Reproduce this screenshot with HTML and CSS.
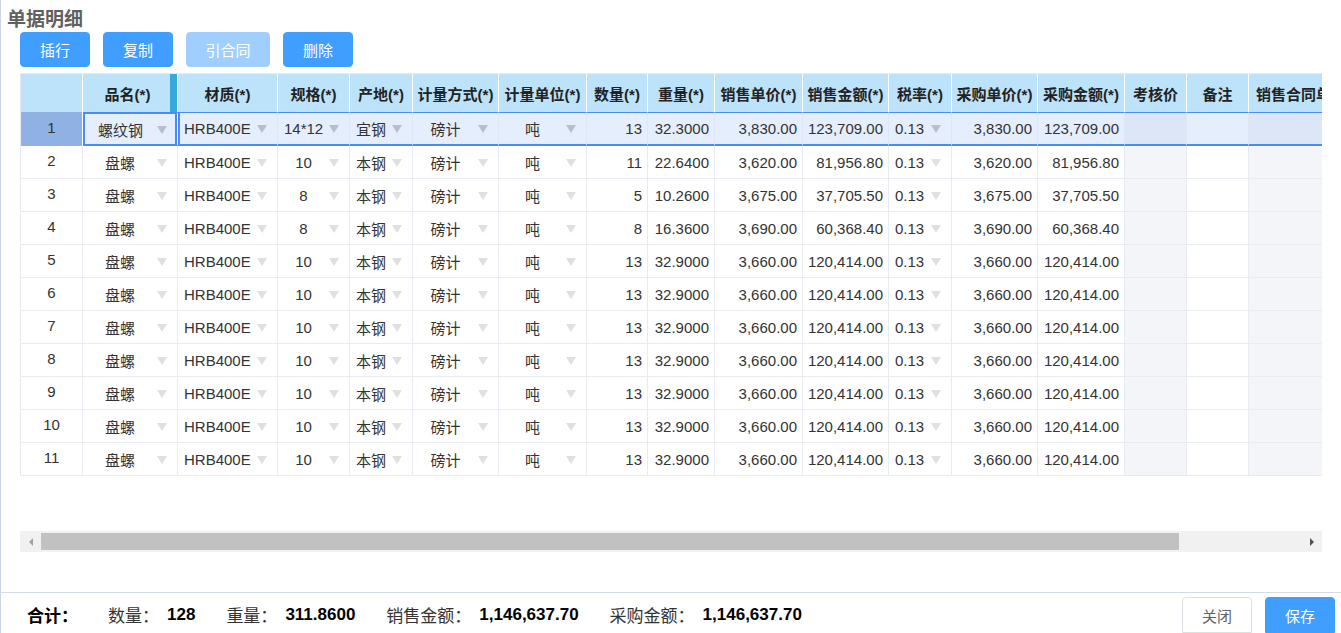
FILE: index.html
```html
<!DOCTYPE html>
<html lang="zh-CN">
<head>
<meta charset="utf-8">
<title>单据明细</title>
<link rel="stylesheet" href="styles.css">
</head>
<body>
<div class="page">
  <div class="title">单据明细</div>
  <div class="toolbar">
    <button class="btn primary">插行</button>
    <button class="btn primary">复制</button>
    <button class="btn primary disabled wide">引合同</button>
    <button class="btn primary">删除</button>
  </div>

  <div class="grid-wrap">
    <div class="viewport">
      <div class="rows">
        <div class="row head">
          <div class="cell">&nbsp;</div>
          <div class="cell split">品名(*)</div>
          <div class="cell">材质(*)</div>
          <div class="cell">规格(*)</div>
          <div class="cell">产地(*)</div>
          <div class="cell">计量方式(*)</div>
          <div class="cell">计量单位(*)</div>
          <div class="cell">数量(*)</div>
          <div class="cell">重量(*)</div>
          <div class="cell">销售单价(*)</div>
          <div class="cell">销售金额(*)</div>
          <div class="cell">税率(*)</div>
          <div class="cell">采购单价(*)</div>
          <div class="cell">采购金额(*)</div>
          <div class="cell">考核价</div>
          <div class="cell">备注</div>
          <div class="cell">销售合同单号</div>
        </div>

        <div class="row sel">
          <div class="cell num">1</div>
          <div class="cell dd center active"><span class="v">螺纹钢</span><i class="arr"></i></div>
          <div class="cell dd first"><span class="v">HRB400E</span><i class="arr"></i></div>
          <div class="cell dd center"><span class="v">14*12</span><i class="arr"></i></div>
          <div class="cell dd"><span class="v">宜钢</span><i class="arr"></i></div>
          <div class="cell dd center"><span class="v">磅计</span><i class="arr"></i></div>
          <div class="cell dd center"><span class="v">吨</span><i class="arr"></i></div>
          <div class="cell r">13</div>
          <div class="cell r">32.3000</div>
          <div class="cell r">3,830.00</div>
          <div class="cell r">123,709.00</div>
          <div class="cell dd"><span class="v">0.13</span><i class="arr"></i></div>
          <div class="cell r">3,830.00</div>
          <div class="cell r">123,709.00</div>
          <div class="cell shade"></div>
          <div class="cell"></div>
          <div class="cell shade"></div>
        </div>

        <div class="row">
          <div class="cell num">2</div>
          <div class="cell dd center"><span class="v">盘螺</span><i class="arr"></i></div>
          <div class="cell dd"><span class="v">HRB400E</span><i class="arr"></i></div>
          <div class="cell dd center"><span class="v">10</span><i class="arr"></i></div>
          <div class="cell dd"><span class="v">本钢</span><i class="arr"></i></div>
          <div class="cell dd center"><span class="v">磅计</span><i class="arr"></i></div>
          <div class="cell dd center"><span class="v">吨</span><i class="arr"></i></div>
          <div class="cell r">11</div>
          <div class="cell r">22.6400</div>
          <div class="cell r">3,620.00</div>
          <div class="cell r">81,956.80</div>
          <div class="cell dd"><span class="v">0.13</span><i class="arr"></i></div>
          <div class="cell r">3,620.00</div>
          <div class="cell r">81,956.80</div>
          <div class="cell shade"></div>
          <div class="cell"></div>
          <div class="cell shade"></div>
        </div>

        <div class="row">
          <div class="cell num">3</div>
          <div class="cell dd center"><span class="v">盘螺</span><i class="arr"></i></div>
          <div class="cell dd"><span class="v">HRB400E</span><i class="arr"></i></div>
          <div class="cell dd center"><span class="v">8</span><i class="arr"></i></div>
          <div class="cell dd"><span class="v">本钢</span><i class="arr"></i></div>
          <div class="cell dd center"><span class="v">磅计</span><i class="arr"></i></div>
          <div class="cell dd center"><span class="v">吨</span><i class="arr"></i></div>
          <div class="cell r">5</div>
          <div class="cell r">10.2600</div>
          <div class="cell r">3,675.00</div>
          <div class="cell r">37,705.50</div>
          <div class="cell dd"><span class="v">0.13</span><i class="arr"></i></div>
          <div class="cell r">3,675.00</div>
          <div class="cell r">37,705.50</div>
          <div class="cell shade"></div>
          <div class="cell"></div>
          <div class="cell shade"></div>
        </div>

        <div class="row">
          <div class="cell num">4</div>
          <div class="cell dd center"><span class="v">盘螺</span><i class="arr"></i></div>
          <div class="cell dd"><span class="v">HRB400E</span><i class="arr"></i></div>
          <div class="cell dd center"><span class="v">8</span><i class="arr"></i></div>
          <div class="cell dd"><span class="v">本钢</span><i class="arr"></i></div>
          <div class="cell dd center"><span class="v">磅计</span><i class="arr"></i></div>
          <div class="cell dd center"><span class="v">吨</span><i class="arr"></i></div>
          <div class="cell r">8</div>
          <div class="cell r">16.3600</div>
          <div class="cell r">3,690.00</div>
          <div class="cell r">60,368.40</div>
          <div class="cell dd"><span class="v">0.13</span><i class="arr"></i></div>
          <div class="cell r">3,690.00</div>
          <div class="cell r">60,368.40</div>
          <div class="cell shade"></div>
          <div class="cell"></div>
          <div class="cell shade"></div>
        </div>

        <div class="row">
          <div class="cell num">5</div>
          <div class="cell dd center"><span class="v">盘螺</span><i class="arr"></i></div>
          <div class="cell dd"><span class="v">HRB400E</span><i class="arr"></i></div>
          <div class="cell dd center"><span class="v">10</span><i class="arr"></i></div>
          <div class="cell dd"><span class="v">本钢</span><i class="arr"></i></div>
          <div class="cell dd center"><span class="v">磅计</span><i class="arr"></i></div>
          <div class="cell dd center"><span class="v">吨</span><i class="arr"></i></div>
          <div class="cell r">13</div>
          <div class="cell r">32.9000</div>
          <div class="cell r">3,660.00</div>
          <div class="cell r">120,414.00</div>
          <div class="cell dd"><span class="v">0.13</span><i class="arr"></i></div>
          <div class="cell r">3,660.00</div>
          <div class="cell r">120,414.00</div>
          <div class="cell shade"></div>
          <div class="cell"></div>
          <div class="cell shade"></div>
        </div>

        <div class="row">
          <div class="cell num">6</div>
          <div class="cell dd center"><span class="v">盘螺</span><i class="arr"></i></div>
          <div class="cell dd"><span class="v">HRB400E</span><i class="arr"></i></div>
          <div class="cell dd center"><span class="v">10</span><i class="arr"></i></div>
          <div class="cell dd"><span class="v">本钢</span><i class="arr"></i></div>
          <div class="cell dd center"><span class="v">磅计</span><i class="arr"></i></div>
          <div class="cell dd center"><span class="v">吨</span><i class="arr"></i></div>
          <div class="cell r">13</div>
          <div class="cell r">32.9000</div>
          <div class="cell r">3,660.00</div>
          <div class="cell r">120,414.00</div>
          <div class="cell dd"><span class="v">0.13</span><i class="arr"></i></div>
          <div class="cell r">3,660.00</div>
          <div class="cell r">120,414.00</div>
          <div class="cell shade"></div>
          <div class="cell"></div>
          <div class="cell shade"></div>
        </div>

        <div class="row">
          <div class="cell num">7</div>
          <div class="cell dd center"><span class="v">盘螺</span><i class="arr"></i></div>
          <div class="cell dd"><span class="v">HRB400E</span><i class="arr"></i></div>
          <div class="cell dd center"><span class="v">10</span><i class="arr"></i></div>
          <div class="cell dd"><span class="v">本钢</span><i class="arr"></i></div>
          <div class="cell dd center"><span class="v">磅计</span><i class="arr"></i></div>
          <div class="cell dd center"><span class="v">吨</span><i class="arr"></i></div>
          <div class="cell r">13</div>
          <div class="cell r">32.9000</div>
          <div class="cell r">3,660.00</div>
          <div class="cell r">120,414.00</div>
          <div class="cell dd"><span class="v">0.13</span><i class="arr"></i></div>
          <div class="cell r">3,660.00</div>
          <div class="cell r">120,414.00</div>
          <div class="cell shade"></div>
          <div class="cell"></div>
          <div class="cell shade"></div>
        </div>

        <div class="row">
          <div class="cell num">8</div>
          <div class="cell dd center"><span class="v">盘螺</span><i class="arr"></i></div>
          <div class="cell dd"><span class="v">HRB400E</span><i class="arr"></i></div>
          <div class="cell dd center"><span class="v">10</span><i class="arr"></i></div>
          <div class="cell dd"><span class="v">本钢</span><i class="arr"></i></div>
          <div class="cell dd center"><span class="v">磅计</span><i class="arr"></i></div>
          <div class="cell dd center"><span class="v">吨</span><i class="arr"></i></div>
          <div class="cell r">13</div>
          <div class="cell r">32.9000</div>
          <div class="cell r">3,660.00</div>
          <div class="cell r">120,414.00</div>
          <div class="cell dd"><span class="v">0.13</span><i class="arr"></i></div>
          <div class="cell r">3,660.00</div>
          <div class="cell r">120,414.00</div>
          <div class="cell shade"></div>
          <div class="cell"></div>
          <div class="cell shade"></div>
        </div>

        <div class="row">
          <div class="cell num">9</div>
          <div class="cell dd center"><span class="v">盘螺</span><i class="arr"></i></div>
          <div class="cell dd"><span class="v">HRB400E</span><i class="arr"></i></div>
          <div class="cell dd center"><span class="v">10</span><i class="arr"></i></div>
          <div class="cell dd"><span class="v">本钢</span><i class="arr"></i></div>
          <div class="cell dd center"><span class="v">磅计</span><i class="arr"></i></div>
          <div class="cell dd center"><span class="v">吨</span><i class="arr"></i></div>
          <div class="cell r">13</div>
          <div class="cell r">32.9000</div>
          <div class="cell r">3,660.00</div>
          <div class="cell r">120,414.00</div>
          <div class="cell dd"><span class="v">0.13</span><i class="arr"></i></div>
          <div class="cell r">3,660.00</div>
          <div class="cell r">120,414.00</div>
          <div class="cell shade"></div>
          <div class="cell"></div>
          <div class="cell shade"></div>
        </div>

        <div class="row">
          <div class="cell num">10</div>
          <div class="cell dd center"><span class="v">盘螺</span><i class="arr"></i></div>
          <div class="cell dd"><span class="v">HRB400E</span><i class="arr"></i></div>
          <div class="cell dd center"><span class="v">10</span><i class="arr"></i></div>
          <div class="cell dd"><span class="v">本钢</span><i class="arr"></i></div>
          <div class="cell dd center"><span class="v">磅计</span><i class="arr"></i></div>
          <div class="cell dd center"><span class="v">吨</span><i class="arr"></i></div>
          <div class="cell r">13</div>
          <div class="cell r">32.9000</div>
          <div class="cell r">3,660.00</div>
          <div class="cell r">120,414.00</div>
          <div class="cell dd"><span class="v">0.13</span><i class="arr"></i></div>
          <div class="cell r">3,660.00</div>
          <div class="cell r">120,414.00</div>
          <div class="cell shade"></div>
          <div class="cell"></div>
          <div class="cell shade"></div>
        </div>

        <div class="row">
          <div class="cell num">11</div>
          <div class="cell dd center"><span class="v">盘螺</span><i class="arr"></i></div>
          <div class="cell dd"><span class="v">HRB400E</span><i class="arr"></i></div>
          <div class="cell dd center"><span class="v">10</span><i class="arr"></i></div>
          <div class="cell dd"><span class="v">本钢</span><i class="arr"></i></div>
          <div class="cell dd center"><span class="v">磅计</span><i class="arr"></i></div>
          <div class="cell dd center"><span class="v">吨</span><i class="arr"></i></div>
          <div class="cell r">13</div>
          <div class="cell r">32.9000</div>
          <div class="cell r">3,660.00</div>
          <div class="cell r">120,414.00</div>
          <div class="cell dd"><span class="v">0.13</span><i class="arr"></i></div>
          <div class="cell r">3,660.00</div>
          <div class="cell r">120,414.00</div>
          <div class="cell shade"></div>
          <div class="cell"></div>
          <div class="cell shade"></div>
        </div>
      </div>
    </div>
    <div class="hscroll">
      <div class="sb-btn left"><i></i></div>
      <div class="sb-thumb"></div>
      <div class="sb-rest"></div>
      <div class="sb-btn right"><i></i></div>
    </div>
  </div>

  <div class="footer">
    <div class="sum">
      <span class="total">合计：</span>
      <span class="item"><span class="lbl">数量：</span><b>128</b></span>
      <span class="item"><span class="lbl">重量：</span><b>311.8600</b></span>
      <span class="item"><span class="lbl">销售金额：</span><b>1,146,637.70</b></span>
      <span class="item"><span class="lbl">采购金额：</span><b>1,146,637.70</b></span>
    </div>
    <div class="actions">
      <button class="btn plain">关闭</button>
      <button class="btn primary">保存</button>
    </div>
  </div>
</div>
</body>
</html>
```

FILE: styles.css
```css
html, body {
  margin: 0;
  padding: 0;
  background: #fff;
}
body {
  font-family: "Liberation Sans", "Noto Sans CJK SC", sans-serif;
  color: #333;
  font-size: 15px;
  overflow: hidden;
}
.page {
  box-sizing: border-box;
  height: 633px;
  border-left: 1px solid #cdd6e6;
  padding-top: 8px;
  display: flex;
  flex-direction: column;
}
.title {
  font-size: 19px;
  font-weight: bold;
  line-height: 24px;
  height: 24px;
  color: #606060;
  padding-left: 6px;
}
.toolbar {
  display: flex;
  gap: 13px;
  padding-left: 19px;
}
.btn {
  box-sizing: border-box;
  width: 70px;
  height: 35px;
  border: 1px solid transparent;
  border-radius: 4px;
  font-family: "Liberation Sans", "Noto Sans CJK SC", sans-serif;
  font-size: 15px;
  padding: 0;
  cursor: pointer;
}
.btn.primary {
  background: #409eff;
  border-color: #409eff;
  color: #fff;
}
.btn.disabled {
  background: #a0cfff;
  border-color: #a0cfff;
}
.btn.wide {
  width: 84px;
}
.btn.plain {
  background: #fff;
  border-color: #dcdfe6;
  color: #606266;
}

.grid-wrap {
  margin-left: 19px;
  margin-top: 6px;
  width: 1302px;
}
.viewport {
  height: 458px;
  overflow: hidden;
}
.rows {
  width: 1348px;
  border-top: 1px solid #e6e9ef;
  border-left: 1px solid #e6e9ef;
}
.row {
  display: grid;
  grid-template-columns: 62px 95px 100px 72px 63px 86px 88px 61px 67px 88px 86px 63px 86px 87px 62px 62px 120px;
  height: 33px;
}
.cell {
  box-sizing: border-box;
  border-right: 1px solid #e8ebf1;
  border-bottom: 1px solid #e8ebf1;
  display: flex;
  align-items: center;
  padding: 0 5px 0 6px;
  white-space: nowrap;
  overflow: hidden;
  color: #333;
}
.cell.r {
  justify-content: flex-end;
}
.cell.num {
  justify-content: center;
  padding: 0 0 3px 0;
}
.cell.shade {
  background: #f3f5f9;
}
.dd .v {
  flex: 1;
  min-width: 0;
}
.dd.center .v {
  text-align: center;
}
.arr {
  flex: none;
  width: 0;
  height: 0;
  border-left: 5px solid transparent;
  border-right: 5px solid transparent;
  border-top: 8px solid #e0e0e0;
  margin: 1px 5px 0 6px;
}

/* header */
.row.head {
  height: 38px;
}
.row.head .cell {
  background: #bde3fb;
  border-right: 1px solid #fff;
  border-bottom: none;
  justify-content: center;
  font-weight: bold;
  color: #222;
  padding: 0 2px;
  overflow: hidden;
}
.row.head .cell:last-child {
  justify-content: flex-start;
  padding-left: 7px;
}
.row.head .cell.split {
  box-shadow: inset -7px 0 0 #37a7dc;
  padding-right: 7px;
}

/* selected row */
.row.sel {
  height: 34px;
}
.row.sel .cell {
  background: #e5eefd;
  border-top: 1px solid #4a8cf5;
  border-bottom: 2px solid #4a8cf5;
  border-right-color: #dfe7f5;
}
.row.sel .cell.shade {
  background: #dce6f6;
}
.row.sel .arr {
  border-top-color: #b7bfcd;
}
.row.sel .cell.num {
  background: #8fb1e4;
  border-top: none;
  border-bottom: none;
  border-right: 1px solid #fff;
}
.row.sel .cell.active {
  border: 2px solid #4a8cf5;
  border-right: 1px solid #fff;
  box-shadow: inset -2px 0 0 #4a8cf5;
  padding-left: 5px;
}
.row.sel .cell.first {
  border-left: 2px solid #4a8cf5;
  padding-left: 4px;
}

/* horizontal scrollbar */
.hscroll {
  display: flex;
  height: 21px;
  background: #f1f1f1;
}
.sb-btn {
  width: 21px;
  display: flex;
  align-items: center;
  justify-content: center;
  flex: none;
}
.sb-btn i {
  width: 0;
  height: 0;
  border-top: 4px solid transparent;
  border-bottom: 4px solid transparent;
}
.sb-btn.left i {
  border-right: 4px solid #a3a3a3;
}
.sb-btn.right i {
  border-left: 4px solid #505050;
}
.sb-thumb {
  width: 1138px;
  height: 17px;
  align-self: center;
  background: #c1c1c1;
  flex: none;
}
.sb-rest {
  flex: 1;
}

/* footer */
.footer {
  margin-top: auto;
  box-sizing: border-box;
  height: 41px;
  border-top: 1px solid #d3dbe8;
  display: flex;
  justify-content: space-between;
  align-items: center;
  padding: 0 6px 0 26px;
}
.sum {
  display: flex;
  align-items: center;
  font-size: 17px;
  color: #333;
  padding-top: 3px;
}
.sum .total {
  font-weight: bold;
  color: #000;
  margin-right: 30px;
}
.sum .item {
  margin-right: 31px;
  display: flex;
  align-items: center;
}
.sum .lbl {
  margin-right: 8px;
}
.sum b {
  color: #000;
}
.actions {
  align-self: flex-end;
  display: flex;
  gap: 13px;
}
.actions .btn {
  height: 36px;
  border-radius: 4px 4px 0 0;
}
```
